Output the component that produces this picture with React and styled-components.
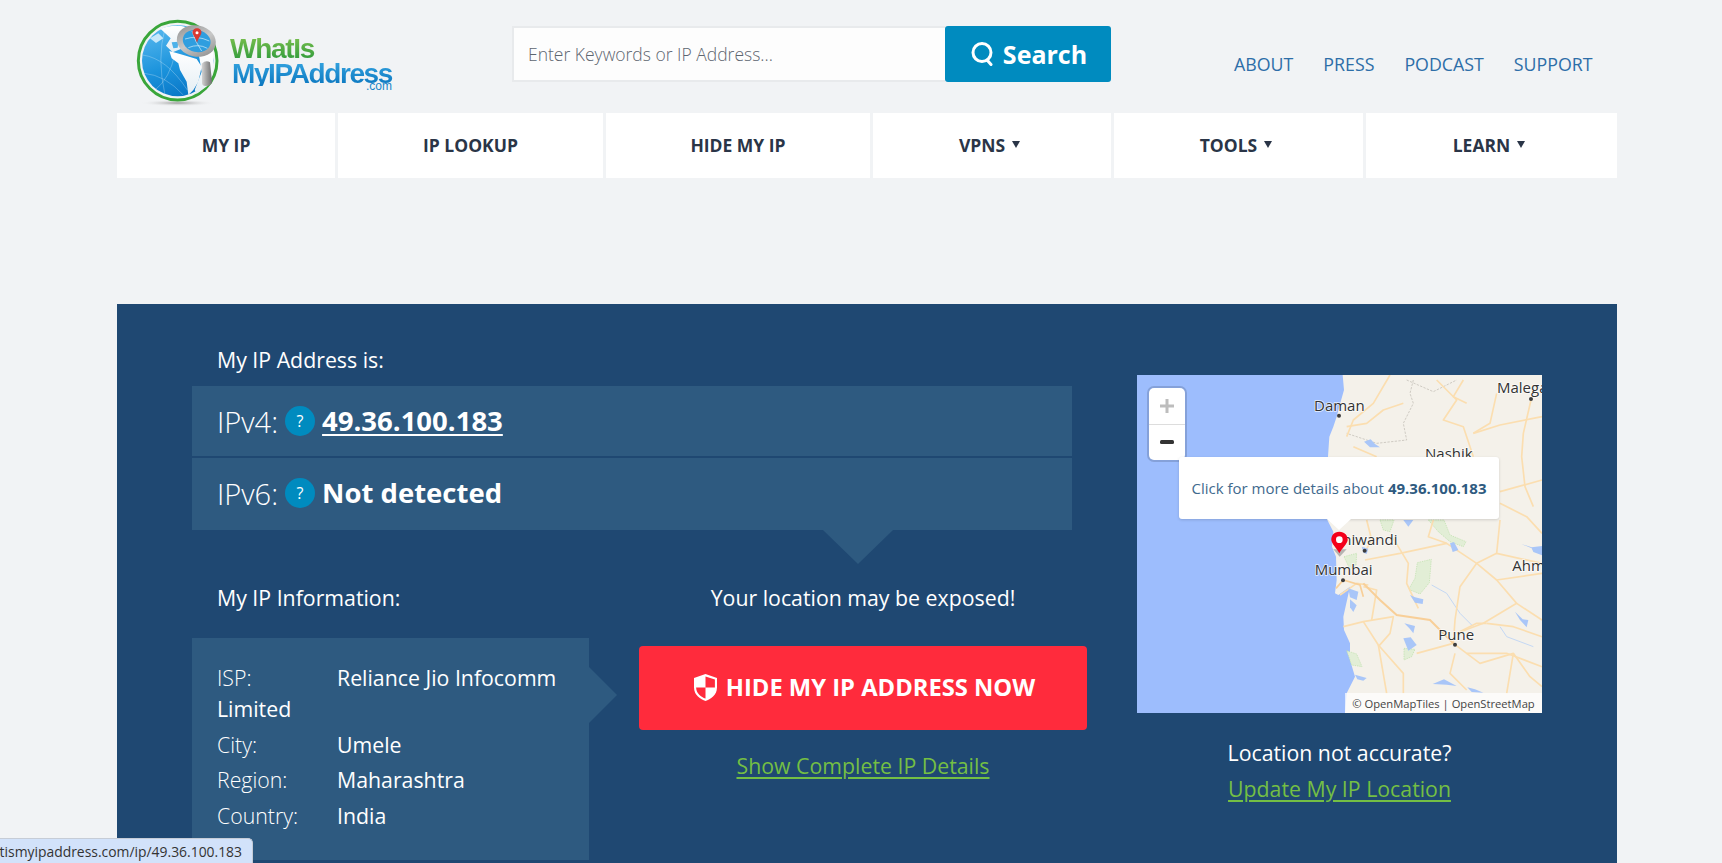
import React from 'react';
import styled, { createGlobalStyle } from 'styled-components';

const Global = createGlobalStyle`
  html, body { margin: 0; height: 863px; overflow: hidden; background: #f1f3f5; }
  body { font-family: "Open Sans", "Liberation Sans", sans-serif; color: #fff; }
  * { box-sizing: border-box; }
`;

const Page = styled.div`
  width: 1500px;
  margin-left: 117px;
  height: 863px;
`;

const Header = styled.header`
  height: 113px;
  display: flex;
  align-items: flex-start;
`;

const Brand = styled.a`
  flex: 0 0 395px;
  display: flex;
  margin-top: 18px;
  padding-left: 18px;
`;

const BrandText = styled.div`
  margin: 18px 0 0 5px;
  width: 164px;
  font-family: "Liberation Sans", Arial, sans-serif;
  font-weight: 700;
  display: flex;
  flex-direction: column;
`;

const BrandTop = styled.span`
  font-size: 28px;
  line-height: 25px;
  letter-spacing: -1.3px;
  background: linear-gradient(#7cc04e, #2e9a3c);
  -webkit-background-clip: text;
  background-clip: text;
  color: transparent;
`;

const BrandMain = styled.span`
  margin-left: 2px;
  font-size: 28px;
  line-height: 25px;
  letter-spacing: -1.4px;
  background: linear-gradient(#35a4e0, #0a76bf);
  -webkit-background-clip: text;
  background-clip: text;
  color: transparent;
`;

const BrandCom = styled.span`
  align-self: flex-end;
  margin: -5px 2px 0 0;
  font-size: 12px;
  font-weight: 400;
  line-height: 11px;
  color: #1785c8;
`;

const SearchBox = styled.form`
  display: flex;
  width: 599px;
  height: 56px;
  margin: 26px 0 0;
`;

const SearchInput = styled.input`
  width: 433px;
  height: 56px;
  padding: 0 14px;
  border: 2px solid #e8eaec;
  border-right: 0;
  background: #fdfdfd;
  font: 300 17.5px "Open Sans", sans-serif;
  outline: none;
  &::placeholder { color: #5d6670; opacity: 1; }
`;

const SearchButton = styled.button`
  width: 166px;
  height: 56px;
  display: flex;
  align-items: center;
  justify-content: center;
  gap: 9px;
  padding: 0 0 0 2px;
  border: 0;
  border-radius: 3px;
  background: #008bbf;
  color: #fff;
  font: 700 25px "Open Sans", sans-serif;
`;

const TopLinks = styled.nav`
  display: flex;
  gap: 30px;
  margin: 52px 0 0 123px;
`;

const TopLink = styled.a`
  font-size: 17.8px;
  line-height: 24px;
  color: #2d6ea8;
`;

const MainNav = styled.nav`
  display: grid;
  grid-template-columns: 218px 265px 264px 238px 249px 251px;
  gap: 3px;
  height: 65px;
`;

const NavItem = styled.a`
  display: flex;
  align-items: center;
  justify-content: center;
  gap: 7px;
  padding: 0 ${p => (p.$more ? 5 : 0)}px 2px 0;
  background: #fff;
  color: #2a3547;
  font-size: 17.5px;
  font-weight: 700;
`;

const Caret = styled.span`
  width: 0;
  height: 0;
  border-left: 4px solid transparent;
  border-right: 4px solid transparent;
  border-top: 7px solid #2a3547;
`;

const Hero = styled.section`
  margin-top: 126px;
  height: 559px;
  padding: 38px 0 0 75px;
  background: #1f4872;
  display: flex;
  gap: 50px;
`;

const Left = styled.div`
  width: 895px;
`;

const Label = styled.div`
  padding-left: 25px;
  font-size: 21.3px;
  line-height: 36px;
`;

const IpRows = styled.div`
  position: relative;
  width: 880px;
  margin-top: 8px;
  display: flex;
  flex-direction: column;
  gap: 2px;
  &::after {
    content: "";
    position: absolute;
    left: 631px;
    top: 100%;
    border-left: 35px solid transparent;
    border-right: 35px solid transparent;
    border-top: 34px solid #2e5a80;
  }
`;

const IpRow = styled.div`
  height: ${p => p.$h}px;
  padding: 0 0 ${p => p.$lift}px 25px;
  display: flex;
  align-items: center;
  background: #2e5a80;
`;

const IpKey = styled.span`
  font-size: 29px;
  font-weight: 300;
`;

const Help = styled.span`
  width: 30px;
  height: 30px;
  margin: 0 7px;
  border-radius: 50%;
  background: #008bbf;
  display: flex;
  align-items: center;
  justify-content: center;
  font-size: 16px;
  font-weight: 400;
`;

const IpValue = styled.a`
  font-size: 27.5px;
  font-weight: 700;
  line-height: 38px;
  color: #fff;
  text-decoration: ${p => (p.$link ? 'underline' : 'none')};
  text-decoration-thickness: 2px;
  text-underline-offset: 3px;
`;

const Lower = styled.div`
  display: grid;
  grid-template-columns: 397px 448px;
  gap: 50px;
  margin-top: 50px;
`;

const InfoCard = styled.div`
  position: relative;
  width: 397px;
  height: 222px;
  margin-top: 22px;
  padding: 24px 25px 0;
  background: #2e5a80;
  &::after {
    content: "";
    position: absolute;
    left: 100%;
    top: 29px;
    border-top: 28px solid transparent;
    border-bottom: 28px solid transparent;
    border-left: 28px solid #2e5a80;
  }
`;

const InfoRow = styled.div`
  font-size: 21.3px;
  line-height: 31px;
  margin-bottom: 4.5px;
`;

const InfoKey = styled.span`
  display: inline-block;
  width: 120px;
  font-weight: 300;
`;

const Cta = styled.div`
  display: flex;
  flex-direction: column;
  align-items: center;
`;

const CtaNote = styled.div`
  font-size: 21.3px;
  line-height: 36px;
`;

const HideButton = styled.a`
  width: 448px;
  height: 84px;
  margin-top: 30px;
  padding: 0 0 2px 3px;
  border-radius: 4px;
  background: #ff2b3c;
  display: flex;
  align-items: center;
  justify-content: center;
  gap: 9px;
  font-size: 23.75px;
  font-weight: 700;
  color: #fff;
`;

const GreenLink = styled.a`
  margin-top: ${p => p.$top}px;
  font-size: 21.3px;
  line-height: 30px;
  color: #74bf44;
  text-decoration: underline;
  text-underline-offset: 3px;
`;

const Right = styled.div`
  width: 405px;
  padding-top: 33px;
  display: flex;
  flex-direction: column;
  align-items: center;
`;

const MapBox = styled.div`
  position: relative;
  width: 405px;
  height: 338px;
  overflow: hidden;
`;

const MapArt = styled.svg`
  display: block;
  width: 405px;
  height: 338px;
`;

const SoftLines = styled.g`
  fill: none;
  stroke: #fbdeb0;
  stroke-width: 5;
  stroke-linejoin: round;
  filter: blur(1px);
`;

const ZoomControl = styled.div`
  position: absolute;
  left: 12px;
  top: 13px;
  width: 36px;
  height: 72px;
  border-radius: 5px;
  background: #fff;
  box-shadow: 0 0 0 2px rgba(90, 110, 150, 0.35);
  display: flex;
  flex-direction: column;
`;

const ZoomButton = styled.div`
  flex: 1;
  display: flex;
  align-items: center;
  justify-content: center;
  & + & { border-top: 1px solid #ddd; }
`;

const Popup = styled.div`
  position: absolute;
  left: 42px;
  top: 82px;
  width: 320px;
  height: 62px;
  border-radius: 3px;
  background: #fff;
  box-shadow: 0 1px 3px rgba(0, 0, 0, 0.15);
  display: flex;
  align-items: center;
  justify-content: center;
  font-size: 15px;
  color: #3f6a8e;
  white-space: nowrap;
  &::after {
    content: "";
    position: absolute;
    left: 148px;
    top: 100%;
    border-left: 12px solid transparent;
    border-right: 12px solid transparent;
    border-top: 11px solid #fff;
  }
  b { margin-left: 4px; color: #2e5a80; }
`;

const Attribution = styled.div`
  position: absolute;
  right: 0;
  bottom: 0;
  width: 197px;
  height: 20px;
  background: rgba(255, 255, 255, 0.7);
  display: flex;
  align-items: center;
  justify-content: center;
  font-size: 11.2px;
  color: #444;
  white-space: nowrap;
`;

const MapNote = styled.div`
  margin-top: 23px;
  font-size: 21.3px;
  line-height: 34px;
`;

const StatusBar = styled.div`
  position: fixed;
  left: 0;
  bottom: 0;
  width: 253px;
  height: 25px;
  padding-right: 10px;
  background: #d2e2fa;
  border-top: 1px solid #c6ccd6;
  border-right: 1px solid #c6ccd6;
  border-top-right-radius: 5px;
  display: flex;
  justify-content: flex-end;
  align-items: center;
  overflow: hidden;
  font-size: 13.9px;
  color: #333;
  white-space: nowrap;
`;

// drawn in 3x coords of the logo crop
const Logo = () => (
  <svg width="90" height="92" viewBox="15 9 270 276">
    <defs>
      <linearGradient id="globe" x1="0.2" y1="0" x2="0.5" y2="1">
        <stop offset="0" stopColor="#59b9ef" />
        <stop offset="0.6" stopColor="#1b93dc" />
        <stop offset="1" stopColor="#0a78c8" />
      </linearGradient>
      <linearGradient id="steel" x1="0" x2="1">
        <stop offset="0" stopColor="#d6d6d6" />
        <stop offset="0.5" stopColor="#a0a0a0" />
        <stop offset="1" stopColor="#6e6e6e" />
      </linearGradient>
      <linearGradient id="rim" x1="0" y1="0" x2="1" y2="1">
        <stop offset="0" stopColor="#8c8c8c" />
        <stop offset="0.5" stopColor="#c8c8c8" />
        <stop offset="1" stopColor="#868686" />
      </linearGradient>
      <linearGradient id="land" x1="0" y1="0" x2="0" y2="1">
        <stop offset="0" stopColor="#ffffff" />
        <stop offset="1" stopColor="#e4eef4" />
      </linearGradient>
      <radialGradient id="shade">
        <stop offset="0" stopColor="#9a9a9a" />
        <stop offset="1" stopColor="#f1f3f5" stopOpacity="0" />
      </radialGradient>
    </defs>
    <ellipse cx="143" cy="264" rx="112" ry="10" fill="url(#shade)" />
    <circle cx="143" cy="137" r="118" fill="none" stroke="#3aa63a" strokeWidth="9" />
    <circle cx="143" cy="137" r="107" fill="url(#globe)" />
    <path d="M92 42 C125 27 170 30 192 50 L200 90 L165 72 L158 100 L128 112 L108 92 L122 70 Z" fill="url(#land)" />
    <path d="M118 108 L160 120 L200 132 L215 155 L205 200 L190 225 L175 240 L170 200 L150 165 L145 145 L125 130 Z" fill="url(#land)" />
    <path d="M205 110 L250 110 L249 170 L232 213 L200 236 L194 225 L215 170 Z" fill="url(#land)" />
    <path d="M125 82 L145 80 L143 98 L130 100 Z" fill="#4db2ea" />
    <path d="M60 70 L85 55 L100 70 L78 84 Z" fill="#c8e8fa" />
    <g fill="none" stroke="#fff" strokeOpacity="0.5" strokeWidth="1.5">
      <path d="M38 120 Q110 130 172 225" />
      <path d="M42 175 Q105 180 160 240" />
      <path d="M105 40 Q80 130 105 240" />
      <path d="M135 115 Q120 190 75 225" />
    </g>
    <ellipse cx="199" cy="78" rx="59" ry="47" transform="rotate(12 199 78)" fill="url(#rim)" />
    <ellipse cx="200" cy="78" rx="42" ry="33" transform="rotate(12 200 78)" fill="#2f9edf" />
    <path d="M165 72 Q200 60 238 78 M186 48 Q195 80 215 108 M175 98 Q205 85 232 100" stroke="#d9f1fc" strokeWidth="2" fill="none" />
    <path d="M201 40 C191 40 186 48 188 55 C190 63 198 70 201 83 C204 70 212 63 214 55 C216 48 211 40 201 40 Z" fill="#d93a34" />
    <circle cx="201" cy="53" r="4.5" fill="#fff" />
    <path d="M215 146 Q228 134 240 142 L246 200 Q245 212 226 213 Q216 212 216 204 Z" fill="url(#steel)" />
  </svg>
);

const SearchIcon = () => (
  <svg width="23" height="24" viewBox="0 0 23 24" fill="none" stroke="#fff" strokeWidth="3" strokeLinecap="round">
    <circle cx="11" cy="10.5" r="9" />
    <path d="M16.5 18.5 L20 22.5" />
  </svg>
);

const ShieldIcon = () => (
  <svg width="23" height="27" viewBox="0 0 24 28">
    <path d="M12 0 L24 4 V14 C24 22 17 26.5 12 28 C7 26.5 0 22 0 14 V4 Z" fill="#fff" />
    <path d="M12 2.5 L21.8 5.7 V14 H12 Z M12 14 V25.6 C7.5 24 2.4 20.5 2.2 14 Z" fill="#ff2b3c" />
  </svg>
);

const PlusIcon = () => (
  <svg width="14" height="14" viewBox="0 0 14 14">
    <path d="M5.5 0 H8.5 V5.5 H14 V8.5 H8.5 V14 H5.5 V8.5 H0 V5.5 H5.5 Z" fill="#bdbdbd" />
  </svg>
);

const MinusIcon = () => (
  <svg width="14" height="14" viewBox="0 0 14 14">
    <rect y="5" width="14" height="4" rx="1.5" fill="#333" />
  </svg>
);

// upper half of the map, in 3x coords of the map crop
const upperRoads = [
  'M810 45 L760 130 L700 180 L680 230',
  'M680 200 L740 190 L790 150 L850 130',
  'M950 60 L1010 120 L970 180 L1030 200 L1060 290',
  'M1130 100 L1110 190 L1060 220',
  'M1233 120 L1210 220 L1205 290 L1215 380 L1240 440',
  'M1060 220 L1140 195 L1266 170',
  'M1140 395 L1266 360',
  'M1140 430 L1220 470 L1266 520',
  'M1030 60 L1000 110 L1040 130',
  'M700 260 L770 290',
];

// lower half, in 3x coords of the crop at (1300,520)
const lowerRoads = [
  'M200 0 L215 60 L195 95',
  'M280 55 L325 130 L320 190 L355 265',
  'M195 120 L300 100 L440 70 L530 130 L590 180 L650 250 L550 310 L470 340',
  'M530 130 L480 200 L465 300 L460 370 L500 400 L620 400 L726 440',
  'M590 180 L726 160',
  'M530 130 L590 100 L726 130',
  'M130 320 L190 305 L235 375 L310 460 L310 520',
  'M190 305 L280 290 L270 340 L235 380',
  'M465 400 L450 460 L500 510',
  'M500 400 L540 430 L640 400 L620 520',
  'M650 250 L726 300',
  'M560 310 L640 320 L726 350',
  'M235 375 L260 520',
  'M640 400 L690 470 L726 500',
  'M470 340 L530 310 L560 310',
  'M400 0 L385 50 L440 70',
  'M190 200 L230 210 L215 300',
  'M600 0 L590 100',
  'M350 400 L460 370',
  'M120 225 L170 190 L205 195',
];

const lowerLakes = [
  'M330 225 L345 232 L370 238 L368 252 L345 248 Z',
  'M313 310 L345 318 L340 340 L328 325 Z',
  'M310 355 L332 352 L350 375 L325 392 Z',
  'M645 275 L668 298 L685 300 L680 322 L660 300 Z',
  'M664 72 L695 82 L726 78 L726 106 L700 96 L695 85 Z',
  'M450 70 L462 66 L475 90 L458 96 Z',
  'M398 492 L432 478 L470 498 L440 494 Z',
  'M502 502 L525 508 L550 518 L515 516 Z',
  'M165 464 L200 474 L190 482 L172 478 Z',
  'M150 238 L170 256 L160 276 L150 262 Z',
  'M185 80 L205 86 L200 102 L190 98 Z',
  'M310 0 L340 0 L325 20 Z',
  'M145 205 L175 215 L170 240 L150 232 Z',
];

const lowerParks = [
  'M352 128 L394 118 L388 188 L360 222 L326 208 L345 175 Z',
  'M385 0 L432 0 L450 45 L498 65 L490 80 L450 65 L415 35 Z',
  'M240 0 L282 0 L270 35 L250 30 Z',
  'M132 110 L170 100 L168 135 L150 148 Z',
  'M140 392 L170 402 L186 440 L155 435 Z',
  'M312 385 L345 388 L335 410 L312 420 Z',
];

const MapDrawing = () => (
  <MapArt viewBox="51 45 1215 1014">
    <rect x="51" y="45" width="1215" height="1014" fill="#9dbdfd" />
    <path
      d="M668 45 L672 90 L662 125 L650 170 L640 200 L628 230 L624 290 L622 480 L640 515 L636 560 L648 590 L650 660 L645 700 L655 705 L690 680 L670 770 L672 810 L690 850 L690 900 L705 950 L680 1000 L675 1059 L1266 1059 L1266 45 Z"
      fill="#f4f1ea"
    />
    <path d="M880 60 L870 100 L880 130 L850 190 L860 240 L770 250 L680 220 M860 60 L940 95 L1010 60" fill="none" stroke="#cfcbc3" strokeWidth="3" strokeDasharray="7 4" />
    <path d="M732 245 L752 238 L765 252 L780 262 L750 262 Z" fill="#a9c6f8" />
    <SoftLines>
      {upperRoads.map(d => <path key={d} d={d} />)}
    </SoftLines>
    <g transform="translate(540 480)">
      {lowerParks.map(d => <path key={d} d={d} fill="#e2eed6" stroke="#b9e0a8" strokeWidth="2" strokeDasharray="4 3" />)}
      <path d="M395 195 L440 220 L480 280 L520 320 M600 320 L620 350 L700 380" fill="none" stroke="#c4d8f4" strokeWidth="3" />
      <SoftLines>
        {lowerRoads.map(d => <path key={d} d={d} />)}
      </SoftLines>
      {lowerLakes.map(d => <path key={d} d={d} fill="#a9c6f8" />)}
      <path d="M190 190 L240 240 L290 285 L390 300 L460 370" fill="none" stroke="#f8cf98" strokeWidth="6" />
      <path d="M108 205 L130 180 L180 195 L190 230" fill="none" stroke="#f8cf98" strokeWidth="5" />
    </g>
    <g fill="#3c3c3c">
      <circle cx="657" cy="167" r="6" />
      <circle cx="1233" cy="117" r="6" />
      <circle cx="734" cy="572" r="6" />
      <circle cx="669" cy="661" r="6" />
      <circle cx="1005" cy="854" r="6" />
    </g>
    <g
      fontFamily='"Open Sans", sans-serif'
      fontSize="45"
      fill="#333"
      stroke="#fff"
      strokeOpacity="0.75"
      strokeWidth="5"
      paintOrder="stroke"
    >
      <text x="582" y="152">Daman</text>
      <text x="1131" y="100">Malegaon</text>
      <text x="915" y="296">Nashik</text>
      <text x="1177" y="632">Ahmednagar</text>
      <text x="638" y="556">Bhiwandi</text>
      <text x="584" y="646">Mumbai</text>
      <text x="955" y="840">Pune</text>
    </g>
    <path d="M640 568 L680 568 L659 590 Z" fill="#8c8c8c" fillOpacity="0.6" />
    <path d="M658 515 C642 515 633 527 634 541 C636 553 651 566 658 580 C665 566 681 553 683 541 C684 527 674 515 658 515 Z" fill="#f4001a" />
    <circle cx="658" cy="539" r="10" fill="#fff" />
  </MapArt>
);

const navItems = [
  ['MY IP'],
  ['IP LOOKUP'],
  ['HIDE MY IP'],
  ['VPNS', true],
  ['TOOLS', true],
  ['LEARN', true],
];

const info = [
  ['ISP:', 'Reliance Jio Infocomm Limited'],
  ['City:', 'Umele'],
  ['Region:', 'Maharashtra'],
  ['Country:', 'India'],
];

const App = () => (
  <Page>
    <Global />
    <Header>
      <Brand>
        <Logo />
        <BrandText>
          <BrandTop>WhatIs</BrandTop>
          <BrandMain>MyIPAddress</BrandMain>
          <BrandCom>.com</BrandCom>
        </BrandText>
      </Brand>
      <SearchBox>
        <SearchInput placeholder="Enter Keywords or IP Address..." />
        <SearchButton type="button"><SearchIcon />Search</SearchButton>
      </SearchBox>
      <TopLinks>
        {['ABOUT', 'PRESS', 'PODCAST', 'SUPPORT'].map(t => <TopLink key={t}>{t}</TopLink>)}
      </TopLinks>
    </Header>
    <MainNav>
      {navItems.map(([t, more]) => (
        <NavItem key={t} $more={more}>{t}{more && <Caret />}</NavItem>
      ))}
    </MainNav>
    <Hero>
      <Left>
        <Label>My IP Address is:</Label>
        <IpRows>
          <IpRow $h={70} $lift={0}>
            <IpKey>IPv4:</IpKey><Help>?</Help>
            <IpValue $link>49.36.100.183</IpValue>
          </IpRow>
          <IpRow $h={72} $lift={2}>
            <IpKey>IPv6:</IpKey><Help>?</Help>
            <IpValue>Not detected</IpValue>
          </IpRow>
        </IpRows>
        <Lower>
          <div>
            <Label>My IP Information:</Label>
            <InfoCard>
              {info.map(([k, v]) => (
                <InfoRow key={k}><InfoKey>{k}</InfoKey>{v}</InfoRow>
              ))}
            </InfoCard>
          </div>
          <Cta>
            <CtaNote>Your location may be exposed!</CtaNote>
            <HideButton><ShieldIcon />HIDE MY IP ADDRESS NOW</HideButton>
            <GreenLink $top={21}>Show Complete IP Details</GreenLink>
          </Cta>
        </Lower>
      </Left>
      <Right>
        <MapBox>
          <MapDrawing />
          <ZoomControl>
            <ZoomButton><PlusIcon /></ZoomButton>
            <ZoomButton><MinusIcon /></ZoomButton>
          </ZoomControl>
          <Popup>Click for more details about <b>49.36.100.183</b></Popup>
          <Attribution>© OpenMapTiles | OpenStreetMap</Attribution>
        </MapBox>
        <MapNote>Location not accurate?</MapNote>
        <GreenLink $top={4}>Update My IP Location</GreenLink>
      </Right>
    </Hero>
    <StatusBar>whatismyipaddress.com/ip/49.36.100.183</StatusBar>
  </Page>
);

export default App;
